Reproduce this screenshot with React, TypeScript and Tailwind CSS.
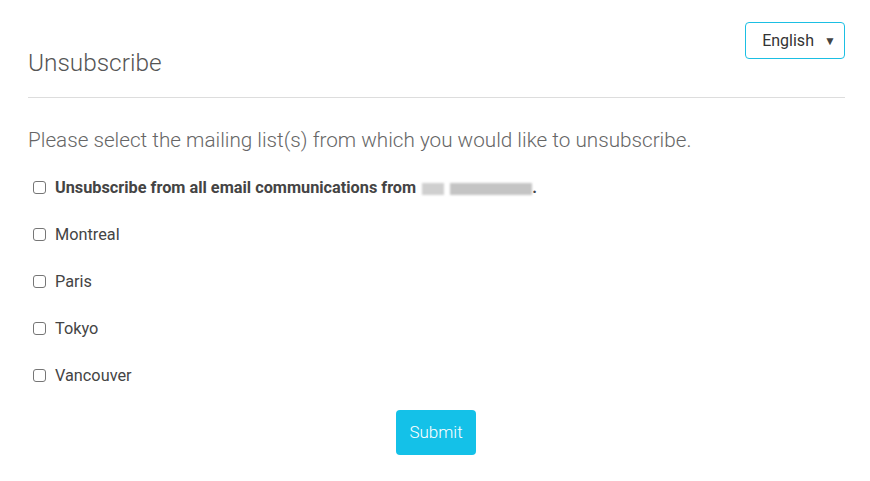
import React from 'react';

const lists = ['Montreal', 'Paris', 'Tokyo', 'Vancouver'];

export default function App() {
  return (
    <div className="min-h-[481px] w-[870px] bg-white font-['Roboto',sans-serif] text-[#444]">
      <div className="px-[28px] pr-[25px]">
        <div className="flex items-start justify-between pt-[22px]">
          <h1 className="mt-[26px] text-[24.4px] font-light leading-[30px] text-[#555]">Unsubscribe</h1>
          <button className="flex h-[37px] w-[100px] items-center justify-center gap-[10px] rounded-[4px] border border-[#1bbfe3] bg-white pl-[8px] text-[16px] text-[#333]">
            English
            <span className="text-[12px] text-[#444]">▼</span>
          </button>
        </div>
        <hr className="mt-[19px] border-t border-[#dddddd]" />
        <p className="mt-[28px] text-[20.7px] font-light leading-[28px] text-[#666]">
          Please select the mailing list(s) from which you would like to unsubscribe.
        </p>
        <div className="mt-[24px] flex flex-col gap-[27px]">
          <Row bold>
            Unsubscribe from all email communications from{' '}
            <span className="ml-[2px] inline-flex h-[12px] w-[110px] select-none gap-[6px] align-middle blur-[1px]">
              <span className="w-[22px] bg-[#cfcfcf]" />
              <span className="flex-1 bg-[#c4c4c4]" />
            </span>
            .
          </Row>
          {lists.map((l) => (
            <Row key={l}>{l}</Row>
          ))}
        </div>
        <div className="mt-[24px] flex justify-center pr-[1px]">
          <button className="h-[45px] w-[80px] rounded-[4px] bg-[#14c1e8] text-[17px] font-light text-white">Submit</button>
        </div>
      </div>
    </div>
  );
}

function Row({ children, bold }: { children: React.ReactNode; bold?: boolean }) {
  return (
    <label className="flex h-[20px] items-start gap-[9px] pl-[5px]">
      <span className="mt-[3px] h-[13px] w-[13px] shrink-0 rounded-[3px] border border-[#767676] bg-white" />
      <span className={`text-[16.3px] leading-[20px] ${bold ? 'font-bold' : ''}`}>{children}</span>
    </label>
  );
}
